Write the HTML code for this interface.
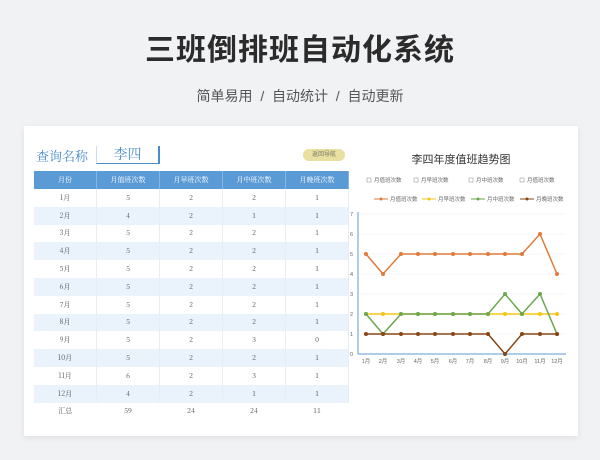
<!DOCTYPE html>
<html><head><meta charset="utf-8"><style>
body{margin:0;width:600px;height:460px;background:#f1f2f4;font-family:"Liberation Sans","Noto Sans CJK SC",sans-serif;position:relative;overflow:hidden}
.t{position:absolute;left:0;width:600px;text-align:center;top:25px;font-size:30px;font-weight:bold;color:#2b2b2b;letter-spacing:1px}
.s{position:absolute;left:0;width:600px;text-align:center;top:86px;font-size:14px;color:#555}
.card{position:absolute;left:24px;top:126px;width:554px;height:310px;background:#fff;box-shadow:0 2px 6px rgba(0,0,0,.08)}
.q{position:absolute;left:36px;top:147px;font-size:13px;color:#4a8ccc;font-family:"Noto Serif CJK SC",serif;line-height:17px}
.box{position:absolute;left:96px;top:146px;width:61px;height:17px;border-bottom:1px solid #4a8ccc;border-right:2px solid #4a8ccc;border-left:1px solid #cde;text-align:center;font-size:14px;color:#4a8ccc;line-height:17px;font-family:"Noto Serif CJK SC",serif}
.btn{position:absolute;left:303px;top:149px;width:42px;height:12px;border-radius:6px;background:#e8dfa0;font-size:6px;color:#776;text-align:center;line-height:12px}
table{position:absolute;left:34px;top:171px;border-collapse:collapse;font-size:7px;color:#555;font-family:"Noto Serif CJK SC",serif}
td{width:62px;height:17.8px;padding:0;text-align:center;border-right:1px solid #e6edf5}
tr.h td{color:#fff;height:18px;border-right:1px solid #85b5e3}
tr:nth-child(odd) td{background:#eaf2fb}
tr.h td{background:#5b9bd5}
tr.sum td{background:#fff;border:none}
</style></head><body>
<div class="t">三班倒排班自动化系统</div>
<div class="s">简单易用 &nbsp;/&nbsp; 自动统计 &nbsp;/&nbsp; 自动更新</div>
<div class="card"></div>
<div class="q">查询名称</div>
<div class="box">李四</div>
<div class="btn">返回导航</div>
<table>
<tr class="h"><td>月份</td><td>月值班次数</td><td>月早班次数</td><td>月中班次数</td><td>月晚班次数</td></tr>
<tr><td>1月</td><td>5</td><td>2</td><td>2</td><td>1</td></tr>
<tr><td>2月</td><td>4</td><td>2</td><td>1</td><td>1</td></tr>
<tr><td>3月</td><td>5</td><td>2</td><td>2</td><td>1</td></tr>
<tr><td>4月</td><td>5</td><td>2</td><td>2</td><td>1</td></tr>
<tr><td>5月</td><td>5</td><td>2</td><td>2</td><td>1</td></tr>
<tr><td>6月</td><td>5</td><td>2</td><td>2</td><td>1</td></tr>
<tr><td>7月</td><td>5</td><td>2</td><td>2</td><td>1</td></tr>
<tr><td>8月</td><td>5</td><td>2</td><td>2</td><td>1</td></tr>
<tr><td>9月</td><td>5</td><td>2</td><td>3</td><td>0</td></tr>
<tr><td>10月</td><td>5</td><td>2</td><td>2</td><td>1</td></tr>
<tr><td>11月</td><td>6</td><td>2</td><td>3</td><td>1</td></tr>
<tr><td>12月</td><td>4</td><td>2</td><td>1</td><td>1</td></tr>
<tr class="sum"><td>汇总</td><td>59</td><td>24</td><td>24</td><td>11</td></tr>
</table>
<svg style="position:absolute;left:0;top:0" width="600" height="460" font-family="Liberation Sans,Noto Sans CJK SC,sans-serif">
<text x="461" y="163" font-size="11" text-anchor="middle" fill="#333">李四年度值班趋势图</text>
<g font-size="5.5" fill="#666">
<rect x="367" y="178" width="4" height="4" fill="none" stroke="#888" stroke-width=".5"/><text x="374" y="182">月值班次数</text>
<rect x="414" y="178" width="4" height="4" fill="none" stroke="#888" stroke-width=".5"/><text x="421" y="182">月早班次数</text>
<rect x="469" y="178" width="4" height="4" fill="none" stroke="#888" stroke-width=".5"/><text x="476" y="182">月中班次数</text>
<rect x="520" y="178" width="4" height="4" fill="none" stroke="#888" stroke-width=".5"/><text x="527" y="182">月值班次数</text>
<line x1="374" y1="199" x2="388" y2="199" stroke="#e07b39"/><circle cx="381" cy="199" r="1.5" fill="#e07b39"/><text x="390" y="201">月值班次数</text>
<line x1="422" y1="199" x2="436" y2="199" stroke="#f5c518"/><circle cx="429" cy="199" r="1.5" fill="#f5c518"/><text x="438" y="201">月早班次数</text>
<line x1="471" y1="199" x2="485" y2="199" stroke="#6aa84f"/><circle cx="478" cy="199" r="1.5" fill="#6aa84f"/><text x="487" y="201">月中班次数</text>
<line x1="520" y1="199" x2="534" y2="199" stroke="#8b4513"/><circle cx="527" cy="199" r="1.5" fill="#8b4513"/><text x="536" y="201">月晚班次数</text>
</g>
<g stroke="#eee" stroke-width=".5"><line x1="358" y1="214" x2="565" y2="214"/><line x1="358" y1="234" x2="565" y2="234"/><line x1="358" y1="254" x2="565" y2="254"/><line x1="358" y1="274" x2="565" y2="274"/><line x1="358" y1="294" x2="565" y2="294"/><line x1="358" y1="314" x2="565" y2="314"/><line x1="358" y1="334" x2="565" y2="334"/></g>
<line x1="358" y1="212" x2="358" y2="354" stroke="#5b9bd5"/><line x1="358" y1="354" x2="566" y2="354" stroke="#5b9bd5"/>
<g font-size="5.5" fill="#666" text-anchor="end"><text x="353" y="216">7</text><text x="353" y="236">6</text><text x="353" y="256">5</text><text x="353" y="276">4</text><text x="353" y="296">3</text><text x="353" y="316">2</text><text x="353" y="336">1</text><text x="353" y="356">0</text></g>
<g font-size="5.5" fill="#666" text-anchor="middle"><text x="366" y="363">1月</text><text x="383" y="363">2月</text><text x="401" y="363">3月</text><text x="418" y="363">4月</text><text x="435" y="363">5月</text><text x="453" y="363">6月</text><text x="470" y="363">7月</text><text x="488" y="363">8月</text><text x="505" y="363">9月</text><text x="522" y="363">10月</text><text x="540" y="363">11月</text><text x="557" y="363">12月</text></g>
<g fill="none" stroke-width="1.5" marker-start="url(#m)">
<polyline stroke="#f5c518" points="366,314 383,314 401,314 418,314 435,314 453,314 470,314 488,314 505,314 522,314 540,314 557,314"/>
<polyline stroke="#e07b39" points="366,254 383,274 401,254 418,254 435,254 453,254 470,254 488,254 505,254 522,254 540,234 557,274"/>
<polyline stroke="#6aa84f" points="366,314 383,334 401,314 418,314 435,314 453,314 470,314 488,314 505,294 522,314 540,294 557,334"/>
<polyline stroke="#8b4513" points="366,334 383,334 401,334 418,334 435,334 453,334 470,334 488,334 505,354 522,334 540,334 557,334"/>
</g>
<g fill="#f5c518"><circle cx="366" cy="314" r="2"/><circle cx="383" cy="314" r="2"/><circle cx="401" cy="314" r="2"/><circle cx="418" cy="314" r="2"/><circle cx="435" cy="314" r="2"/><circle cx="453" cy="314" r="2"/><circle cx="470" cy="314" r="2"/><circle cx="488" cy="314" r="2"/><circle cx="505" cy="314" r="2"/><circle cx="522" cy="314" r="2"/><circle cx="540" cy="314" r="2"/><circle cx="557" cy="314" r="2"/></g>
<g fill="#e07b39"><circle cx="366" cy="254" r="2"/><circle cx="383" cy="274" r="2"/><circle cx="401" cy="254" r="2"/><circle cx="418" cy="254" r="2"/><circle cx="435" cy="254" r="2"/><circle cx="453" cy="254" r="2"/><circle cx="470" cy="254" r="2"/><circle cx="488" cy="254" r="2"/><circle cx="505" cy="254" r="2"/><circle cx="522" cy="254" r="2"/><circle cx="540" cy="234" r="2"/><circle cx="557" cy="274" r="2"/></g>
<g fill="#6aa84f"><circle cx="366" cy="314" r="2"/><circle cx="383" cy="334" r="2"/><circle cx="401" cy="314" r="2"/><circle cx="418" cy="314" r="2"/><circle cx="435" cy="314" r="2"/><circle cx="453" cy="314" r="2"/><circle cx="470" cy="314" r="2"/><circle cx="488" cy="314" r="2"/><circle cx="505" cy="294" r="2"/><circle cx="522" cy="314" r="2"/><circle cx="540" cy="294" r="2"/><circle cx="557" cy="334" r="2"/></g>
<g fill="#8b4513"><circle cx="366" cy="334" r="2"/><circle cx="383" cy="334" r="2"/><circle cx="401" cy="334" r="2"/><circle cx="418" cy="334" r="2"/><circle cx="435" cy="334" r="2"/><circle cx="453" cy="334" r="2"/><circle cx="470" cy="334" r="2"/><circle cx="488" cy="334" r="2"/><circle cx="505" cy="354" r="2"/><circle cx="522" cy="334" r="2"/><circle cx="540" cy="334" r="2"/><circle cx="557" cy="334" r="2"/></g>
</svg>
</body></html>
